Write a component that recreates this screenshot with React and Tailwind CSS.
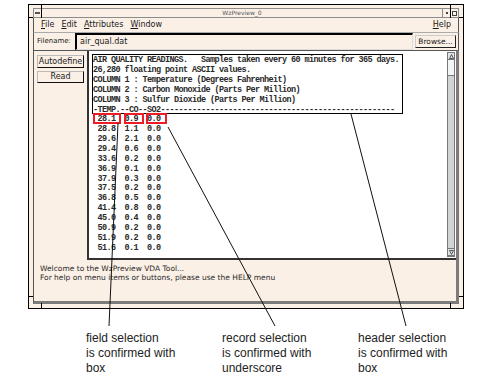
const header = [
  "AIR QUALITY READINGS.   Samples taken every 60 minutes for 365 days.",
  "26,280 floating point ASCII values.",
  "COLUMN 1 : Temperature (Degrees Fahrenheit)",
  "COLUMN 2 : Carbon Monoxide (Parts Per Million)",
  "COLUMN 3 : Sulfur Dioxide (Parts Per Million)",
  "-TEMP.--CO--SO2" + "-".repeat(52),
];

const rows = [
  ["28.1", "0.9", "0.0"],
  ["28.8", "1.1", "0.0"],
  ["29.6", "2.1", "0.0"],
  ["29.4", "0.6", "0.0"],
  ["33.6", "0.2", "0.0"],
  ["36.9", "0.1", "0.0"],
  ["37.9", "0.3", "0.0"],
  ["37.5", "0.2", "0.0"],
  ["36.8", "0.5", "0.0"],
  ["41.4", "0.8", "0.0"],
  ["45.0", "0.4", "0.0"],
  ["50.9", "0.2", "0.0"],
  ["51.9", "0.2", "0.0"],
  ["51.6", "0.1", "0.0"],
];

const labels = [
  ["field selection", "is confirmed with", "box"],
  ["record selection", "is confirmed with", "underscore"],
  ["header selection", "is confirmed with", "box"],
];

const ui = { fontFamily: '"DejaVu Sans", sans-serif' };
const mono = { fontFamily: '"Liberation Mono", monospace' };

const MenuItem = ({ label }) => (
  <span>
    <span className="underline underline-offset-1">{label[0]}</span>
    {label.slice(1)}
  </span>
);

const Arrow = ({ up }) => (
  <div className="h-[7px] border-b border-[#777] bg-[#e4e4e4] flex items-center justify-center">
    <svg width="5" height="5" viewBox="0 0 5 5">
      <polygon
        points={up ? "2.5,0.5 4.5,4.5 0.5,4.5" : "0.5,0.5 4.5,0.5 2.5,4.5"}
        fill="none"
        stroke="#333"
        strokeWidth="0.8"
      />
    </svg>
  </div>
);

export default function App() {
  return (
    <div className="relative w-[494px] h-[379px] bg-white overflow-hidden">
      {/* window */}
      <div className="relative ml-[28px] mt-[4px] w-[436px] h-[305px] border border-black bg-[#faf0e6] px-[4px] pt-[3px] pb-[4px]">
        {/* frame corner marks */}
        <div className="absolute left-[12px] top-0 w-px h-[13px] bg-black" />
        <div className="absolute right-[12px] top-0 w-px h-[13px] bg-black" />
        <div className="absolute left-0 top-[12px] w-[4px] h-px bg-black" />
        <div className="absolute right-0 top-[12px] w-[4px] h-px bg-black" />
        <div className="absolute left-[12px] bottom-0 w-px h-[5px] bg-black" />
        <div className="absolute right-[12px] bottom-0 w-px h-[5px] bg-black" />
        <div className="absolute left-0 bottom-[11px] w-[4px] h-px bg-black" />
        <div className="absolute right-0 bottom-[11px] w-[4px] h-px bg-black" />

        <div className="flex flex-col h-full text-[#1a1a1a]" style={ui}>
          {/* title bar */}
          <div className="h-[10px] flex border border-[#8c8c8c] bg-[#faf0e6]">
            <div className="w-[8px] border-r border-[#8c8c8c] flex items-center justify-center">
              <div className="w-[5px] h-[2px] bg-[#555]" />
            </div>
            <div className="flex-1 flex items-center justify-center text-[6px] leading-none text-[#555]">
              WzPreview_0
            </div>
            <div className="w-[8px] border-l border-[#8c8c8c] flex items-center justify-center">
              <div className="w-[2px] h-[2px] bg-[#444]" />
            </div>
            <div className="w-[8px] border-l border-[#8c8c8c] flex items-center justify-center">
              <div className="w-[5px] h-[5px] border border-[#444]" />
            </div>
          </div>

          {/* menu bar */}
          <div className="h-[15px] flex items-center px-[7px] text-[8px] leading-none border-b border-[#aaa] border-l border-r border-l-[#555] border-r-[#555]">
            <div className="flex gap-[7px]">
              <MenuItem label="File" />
              <MenuItem label="Edit" />
              <MenuItem label="Attributes" />
              <MenuItem label="Window" />
            </div>
            <div className="ml-auto">
              <MenuItem label="Help" />
            </div>
          </div>

          {/* filename row */}
          <div className="h-[17px] flex items-center border-l border-r border-[#555]">
            <div className="w-[41px] pl-[3px] text-[7px] leading-none">Filename:</div>
            <div className="h-full flex-1 flex items-center border-t-2 border-l-2 border-black border-b border-r border-b-[#ddd] border-r-[#ddd] pl-[3px] text-[8px] leading-none">
              air_qual.dat
            </div>
            <div className="ml-[2px] mr-[2px] h-[13px] w-[41px] flex items-center justify-center border border-[#ccc] border-r-[#222] border-b-[#222] text-[7.5px] leading-none">
              Browse...
            </div>
          </div>

          {/* main */}
          <div className="h-[210px] flex border-t border-[#555] border-l border-l-[#555] border-r-[3px] border-r-[#7b7b7b]">
            <div className="w-[55px] border-r-2 border-[#333] flex flex-col items-center pt-[4px] gap-[3px]">
              <div className="w-[47px] h-[13px] flex items-center justify-center border border-[#bbb] border-r-[#111] border-b-[#111] text-[8px] leading-none">
                Autodefine
              </div>
              <div className="w-[47px] h-[12px] flex items-center justify-center border border-[#bbb] border-r-[#111] border-b-[#111] text-[8px] leading-none">
                Read
              </div>
            </div>
            <div className="flex-1 flex border-b-2 border-[#333]">
              <div className="relative flex-1 bg-white pl-[3px] pt-[3px] overflow-hidden" style={mono}>
                <div className="w-[311px] h-[60px] border border-black text-[8.5px] font-bold tracking-[-0.6px] leading-[10px] whitespace-pre text-[#2a2a2a]">
                  {header.map((l, i) => (
                    <div key={i}>{l}</div>
                  ))}
                </div>
                <div className="pl-[1px] text-[8.5px] font-bold tracking-[-0.6px] leading-[9.92px] whitespace-pre text-[#2a2a2a] mt-[1px]">
                  {rows.map((r, i) => (
                    <div key={i}>{" " + r[0] + "  " + r[1] + "  " + r[2]}</div>
                  ))}
                </div>
                {/* selection boxes */}
                <div className="absolute left-[4px] top-[62px] w-[28px] h-[11px] border-2 border-[#ee1c24]" />
                <div className="absolute left-[35px] top-[62px] w-[20px] h-[11px] border-2 border-[#ee1c24]" />
                <div className="absolute left-[57px] top-[62px] w-[21px] h-[11px] border-2 border-[#ee1c24]" />
              </div>
              <div className="w-[9px] bg-white py-[1px] pr-[1px]">
                <div className="h-full flex flex-col border border-[#777] bg-[#d3d3d3]">
                  <Arrow up />
                  <div className="h-[16px] bg-[#f4f4f4] border-b border-[#777]" />
                  <div className="flex-1" />
                  <div className="border-t border-[#777]">
                    <Arrow />
                  </div>
                </div>
              </div>
            </div>
          </div>

          {/* status */}
          <div className="flex-1 border-l border-[#555] border-r-[3px] border-r-[#7b7b7b] border-b-[3px] border-b-[#7b7b7b] pl-[6px] pt-[4px] text-[7.5px] leading-[9px] text-[#2a2a2a]">
            <div>Welcome to the WzPreview VDA Tool...</div>
            <div>For help on menu items or buttons, please use the HELP menu</div>
          </div>
        </div>
      </div>

      {/* captions */}
      <div className="flex pl-[86px] mt-[22px] text-[12px] leading-[15px] text-[#222]" style={{ fontFamily: '"Liberation Sans", Arial, sans-serif' }}>
        {labels.map((l, i) => (
          <div key={i} className="w-[140px]">
            {l.map((t, j) => (
              <div key={j}>{t}</div>
            ))}
          </div>
        ))}
      </div>

      {/* leader lines */}
      <svg className="absolute left-0 top-0 pointer-events-none" width="494" height="379">
        <line x1="118" y1="123" x2="109" y2="326" stroke="#111" strokeWidth="1" />
        <line x1="168" y1="127" x2="275" y2="326" stroke="#111" strokeWidth="1" />
        <line x1="351" y1="114" x2="406" y2="326" stroke="#111" strokeWidth="1" />
      </svg>
    </div>
  );
}
